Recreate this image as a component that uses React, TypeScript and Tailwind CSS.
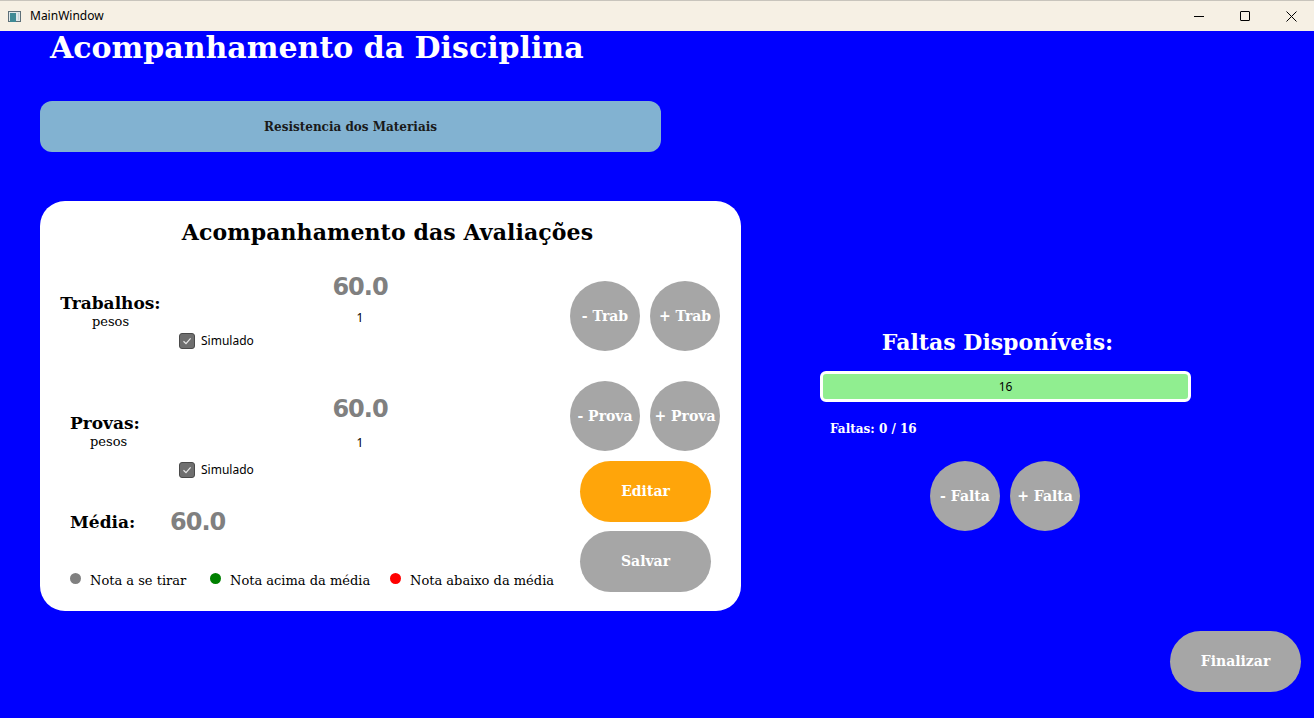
import React from "react";

const serif = "font-['DejaVu_Serif',serif]";

function Circle({ label }: { label: string }) {
  return (
    <div className={`w-[70px] h-[70px] rounded-full bg-[#a6a6a6] flex items-center justify-center text-white font-bold text-[14px] whitespace-nowrap ${serif}`}>
      {label}
    </div>
  );
}

function Pill({ label, color }: { label: string; color: string }) {
  return (
    <div className={`w-[131px] h-[61px] rounded-full ${color} flex items-center justify-center text-white font-bold text-[14px] ${serif}`}>
      {label}
    </div>
  );
}

function Check() {
  return (
    <div className="flex items-center">
      <div className="w-[16px] h-[16px] rounded-[3px] bg-[#6f6f6f] border border-[#4a4a4a] flex items-center justify-center">
        <svg width="10" height="10" viewBox="0 0 10 10">
          <path d="M1.5 5.2 L4 7.6 L8.6 2.4" fill="none" stroke="#e8e8e8" strokeWidth="1.2" />
        </svg>
      </div>
      <span className="ml-[6px] text-[12px] leading-[16px] text-black font-['Noto_Sans',sans-serif]">Simulado</span>
    </div>
  );
}

function Value({ v }: { v: string }) {
  return (
    <div className="text-[24px] leading-[30px] font-bold text-[#808080] tracking-[-1px] font-['DejaVu_Sans',sans-serif]">{v}</div>
  );
}

export default function App() {
  return (
    <div className="w-[1314px] h-[718px] flex flex-col overflow-hidden">
      {/* title bar */}
      <div className="h-[31px] bg-[#f6f0e4] flex items-center border-t border-[#c8c4bc] shrink-0">
        <div className="ml-[8px] w-[13px] h-[11px] border border-[#5d6f78] bg-[#dfe8ea] flex">
          <div className="w-[6px] h-full bg-[#3f8a95] m-[1px]" />
          <div className="flex-1 bg-[#c3d4d8] m-[1px]" />
        </div>
        <span className="ml-[9px] text-[12px] text-black font-['Noto_Sans',sans-serif]">MainWindow</span>
        <div className="ml-auto flex items-center h-full">
          <div className="w-[46px] h-full flex items-center justify-center">
            <div className="w-[10px] h-[1px] bg-black" />
          </div>
          <div className="w-[46px] h-full flex items-center justify-center">
            <div className="w-[10px] h-[10px] border border-black rounded-[1px]" />
          </div>
          <div className="w-[46px] h-full flex items-center justify-center">
            <svg width="11" height="11" viewBox="0 0 11 11">
              <path d="M0.5 0.5 L10.5 10.5 M10.5 0.5 L0.5 10.5" stroke="black" strokeWidth="1" />
            </svg>
          </div>
        </div>
      </div>

      {/* main */}
      <div className="flex-1 bg-[#0000ff] flex flex-col">
        <div className="h-[70px] pl-[50px]">
          <div className={`text-[30px] leading-[34px] font-bold text-white ${serif}`}>
            Acompanhamento da Disciplina
          </div>
        </div>

        <div className="ml-[40px] w-[621px] h-[51px] rounded-[12px] bg-[#82b2d1] flex items-center justify-center">
          <span className={`text-[12px] font-bold text-[#1a1a1a] ${serif}`}>Resistencia dos Materiais</span>
        </div>

        <div className="mt-[49px] flex">
          {/* card */}
          <div className="ml-[40px] w-[701px] h-[410px] bg-white rounded-[25px] flex flex-col">
            <div className={`pt-[17px] text-center text-[22px] leading-[28px] font-bold text-black pr-[6px] tracking-[0.1px] ${serif}`}>
              Acompanhamento das Avaliações
            </div>
            <div className="flex">
              <div className="w-[530px] flex flex-col">
                {/* Trabalhos */}
                <div className="mt-[25px] h-[78px] flex">
                  <div className="w-[139px] flex flex-col items-center pt-[21px] pl-[2px]">
                    <div className={`text-[17px] leading-[22px] font-bold text-black ${serif}`}>Trabalhos:</div>
                    <div className={`text-[13px] leading-[16px] text-black ${serif}`}>pesos</div>
                  </div>
                  <div className="w-[362px] flex flex-col">
                    <div className="flex flex-col items-center pt-[1px]">
                      <Value v="60.0" />
                      <div className="mt-[8px] text-[12px] leading-[16px] text-black font-['Noto_Sans',sans-serif]">1</div>
                    </div>
                    <div className="mt-[7px]">
                      <Check />
                    </div>
                  </div>
                </div>

                {/* Provas */}
                <div className="mt-[44px] h-[85px] flex">
                  <div className="w-[139px] flex flex-col pt-[19px]">
                    <div className={`pl-[30px] text-[17px] leading-[22px] font-bold text-black ${serif}`}>Provas:</div>
                    <div className={`pl-[50px] text-[13px] leading-[16px] text-black ${serif}`}>pesos</div>
                  </div>
                  <div className="w-[362px] flex flex-col">
                    <div className="flex flex-col items-center pt-[1px]">
                      <Value v="60.0" />
                      <div className="mt-[11px] text-[12px] leading-[16px] text-black font-['Noto_Sans',sans-serif]">1</div>
                    </div>
                    <div className="mt-[11px]">
                      <Check />
                    </div>
                  </div>
                </div>

                {/* Média */}
                <div className="mt-[29px] h-[30px] flex items-center">
                  <div className={`w-[130px] pl-[30px] text-[17px] leading-[22px] font-bold text-black ${serif}`}>Média:</div>
                  <Value v="60.0" />
                </div>

                {/* legend */}
                <div className="mt-[36px] flex items-start pl-[30px]">
                  <div className="w-[140px] flex items-start">
                    <div className="w-[11px] h-[11px] rounded-full bg-[#808080]" />
                    <span className={`ml-[9px] text-[13px] leading-[16px] text-black ${serif}`}>Nota a se tirar</span>
                  </div>
                  <div className="w-[180px] flex items-start">
                    <div className="w-[11px] h-[11px] rounded-full bg-[#008000]" />
                    <span className={`ml-[9px] text-[13px] leading-[16px] text-black ${serif}`}>Nota acima da média</span>
                  </div>
                  <div className="flex items-start">
                    <div className="w-[11px] h-[11px] rounded-full bg-[#ff0000]" />
                    <span className={`ml-[9px] text-[13px] leading-[16px] text-black whitespace-nowrap ${serif}`}>Nota abaixo da média</span>
                  </div>
                </div>
              </div>

              {/* buttons */}
              <div className="flex flex-col">
                <div className="mt-[35px] flex gap-[10px]">
                  <Circle label="- Trab" />
                  <Circle label="+ Trab" />
                </div>
                <div className="mt-[30px] flex gap-[10px]">
                  <Circle label="- Prova" />
                  <Circle label="+ Prova" />
                </div>
                <div className="mt-[10px] ml-[10px]">
                  <Pill label="Editar" color="bg-[#ffa50a]" />
                </div>
                <div className="mt-[9px] ml-[10px]">
                  <Pill label="Salvar" color="bg-[#a6a6a6]" />
                </div>
              </div>
            </div>
          </div>

          {/* right panel */}
          <div className="ml-[79px] w-[371px] flex flex-col pt-[129px]">
            <div className={`text-center pr-[16px] text-[22px] leading-[24px] font-bold text-white ${serif}`}>
              Faltas Disponíveis:
            </div>
            <div className="mt-[17px] h-[31px] rounded-[6px] border-[3px] border-white bg-[#90ee90] flex items-center justify-center">
              <span className="text-[12px] text-black font-['Noto_Sans',sans-serif]">16</span>
            </div>
            <div className={`mt-[19px] pl-[10px] text-[12px] leading-[16px] font-bold text-white ${serif}`}>
              Faltas: 0 / 16
            </div>
            <div className="mt-[24px] flex justify-center gap-[10px] pr-[1px]">
              <Circle label="- Falta" />
              <Circle label="+ Falta" />
            </div>
          </div>
        </div>

        <div className="mt-[20px] self-end mr-[13px]">
          <Pill label="Finalizar" color="bg-[#a6a6a6]" />
        </div>
      </div>
    </div>
  );
}
